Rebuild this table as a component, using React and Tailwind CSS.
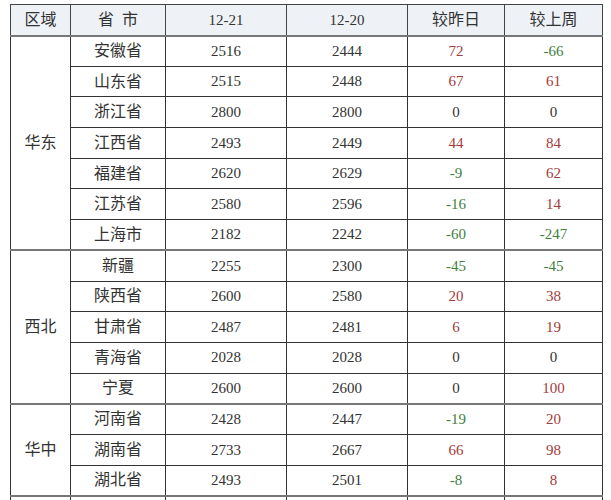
import React from 'react';

const groups = [
  {
    region: '华东',
    rows: [
      ['安徽省', 2516, 2444, 72, -66],
      ['山东省', 2515, 2448, 67, 61],
      ['浙江省', 2800, 2800, 0, 0],
      ['江西省', 2493, 2449, 44, 84],
      ['福建省', 2620, 2629, -9, 62],
      ['江苏省', 2580, 2596, -16, 14],
      ['上海市', 2182, 2242, -60, -247],
    ],
  },
  {
    region: '西北',
    rows: [
      ['新疆', 2255, 2300, -45, -45],
      ['陕西省', 2600, 2580, 20, 38],
      ['甘肃省', 2487, 2481, 6, 19],
      ['青海省', 2028, 2028, 0, 0],
      ['宁夏', 2600, 2600, 0, 100],
    ],
  },
  {
    region: '华中',
    rows: [
      ['河南省', 2428, 2447, -19, 20],
      ['湖南省', 2733, 2667, 66, 98],
      ['湖北省', 2493, 2501, -8, 8],
    ],
  },
  {
    region: '',
    rows: [['', '', '', '', '']],
  },
];

const font = { fontFamily: '"Liberation Serif", "Noto Sans CJK SC", serif' };

function Change({ v }) {
  if (v === '') return null;
  const color = v > 0 ? 'text-[#a33b3b]' : v < 0 ? 'text-[#3f7f3f]' : 'text-[#333]';
  return <span className={color}>{v}</span>;
}

export default function App() {
  return (
    <div className="w-[611px] h-[500px] overflow-hidden bg-white pt-[4px] pl-[10px]" style={font}>
      <table className="border-collapse table-fixed text-[15px] text-[#333] border border-[#333]">
        <colgroup>
          <col className="w-[60px]" />
          <col className="w-[95px]" />
          <col className="w-[121px]" />
          <col className="w-[121px]" />
          <col className="w-[97px]" />
          <col className="w-[98px]" />
        </colgroup>
        <thead>
          <tr className="h-[31px] bg-[#eef2f7]">
            <th className="font-normal border border-[#444] border-b-[#666] text-[16px]">区域</th>
            <th className="font-normal border border-[#444] border-b-[#666] text-[16px]">省&nbsp;&nbsp;市</th>
            <th className="font-normal border border-[#444] border-b-[#666]">12-21</th>
            <th className="font-normal border border-[#444] border-b-[#666]">12-20</th>
            <th className="font-normal border border-[#444] border-b-[#666] text-[16px]">较昨日</th>
            <th className="font-normal border border-[#444] border-b-[#666] text-[16px]">较上周</th>
          </tr>
        </thead>
        <tbody>
          {groups.map((g) =>
            g.rows.map((r, i) => (
              <tr
                key={g.region + i}
                className={`h-[30.7px] text-center ${i === 0 ? 'border-t-2 border-t-[#777]' : ''}`}
              >
                {i === 0 && (
                  <td rowSpan={g.rows.length} className="border border-[#333] text-[16px] border-t-2 border-t-[#777]">
                    {g.region}
                  </td>
                )}
                <td className="border border-[#333] text-[16px]">{r[0]}</td>
                <td className="border border-[#333]">{r[1]}</td>
                <td className="border border-[#333]">{r[2]}</td>
                <td className="border border-[#333]"><Change v={r[3]} /></td>
                <td className="border border-[#333]"><Change v={r[4]} /></td>
              </tr>
            ))
          )}
        </tbody>
      </table>
    </div>
  );
}
